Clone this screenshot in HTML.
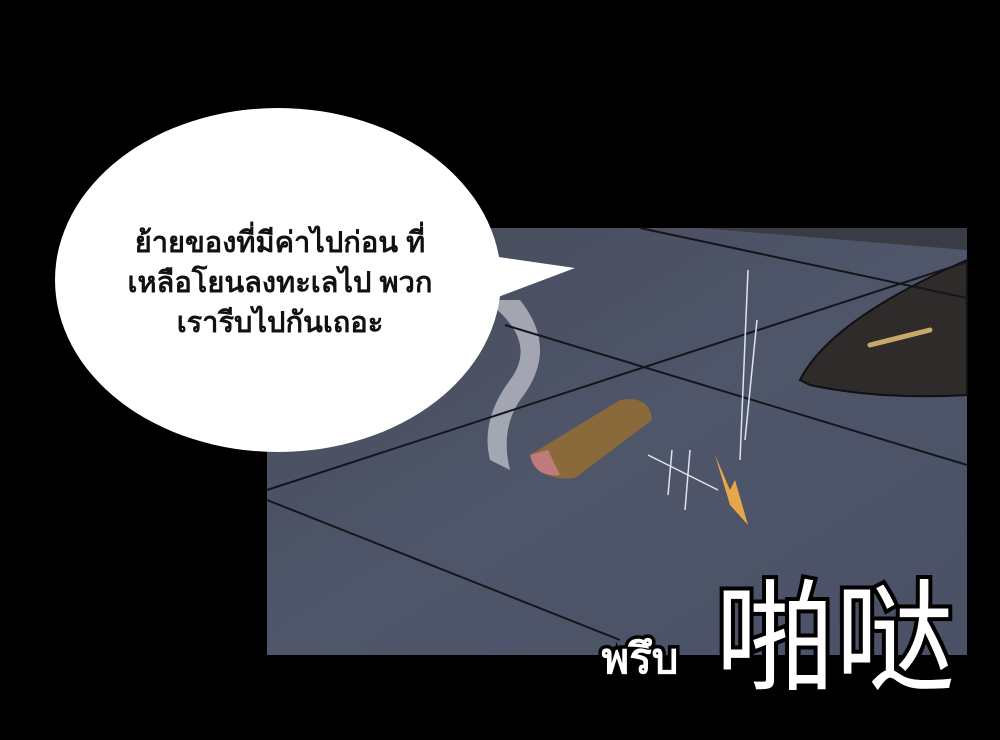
<!DOCTYPE html>
<html><head><meta charset="utf-8"><style>
html,body{margin:0;padding:0;background:#000;width:1000px;height:740px;overflow:hidden}
svg{display:block}
</style></head><body>
<svg width="1000" height="740" viewBox="0 0 1000 740" xmlns="http://www.w3.org/2000/svg">
<rect width="1000" height="740" fill="#000"/>
<defs>
<linearGradient id="g" x1="0" y1="0" x2="1" y2="1">
<stop offset="0" stop-color="#464b59"/><stop offset="0.5" stop-color="#4f566a"/><stop offset="1" stop-color="#4a5166"/>
</linearGradient>
</defs>
<rect x="267" y="228" width="700" height="427" fill="url(#g)"/>
<path d="M500 228 L967 228 L967 250 L700 228 Z" fill="#3a3c44"/>
<path d="M800 380 Q830 320 967 260 L967 395 Q880 400 810 385 Z" fill="#2e2b2a" stroke="#111" stroke-width="2"/>
<path d="M870 345 L930 330" stroke="#c9a96a" stroke-width="5" stroke-linecap="round"/>
<path d="M485 300 Q540 340 510 380 Q480 420 490 460 L510 470 Q500 430 520 400 Q560 350 520 300 Z" fill="#b9bcc6" opacity="0.8"/>
<g stroke="#15161c" stroke-width="2" fill="none">
<path d="M267 490 L967 262"/>
<path d="M505 325 L967 465"/>
<path d="M267 500 L620 640"/>
<path d="M640 228 L967 298"/>
</g>
<path d="M530 455 L620 400 Q650 395 652 420 L575 478 Q540 482 530 455 Z" fill="#8a6a3a"/>
<path d="M530 455 Q535 478 560 475 L548 450 Z" fill="#c07a78"/>
<g stroke="#dfe3ee" stroke-width="1.5" fill="none">
<path d="M748 270 L740 460"/><path d="M757 320 L745 440"/>
<path d="M672 450 L668 495"/><path d="M690 450 L685 510"/><path d="M648 455 L718 490"/>
</g>
<path d="M715 455 L730 490 L735 480 L748 525 L730 505 Z" fill="#e8a64a"/>
<ellipse cx="278" cy="280" rx="223" ry="172" fill="#fff"/>
<path d="M485 255 L575 268 L490 300 Z" fill="#fff"/>
<g font-family="'Liberation Sans','Noto Sans CJK SC',sans-serif" font-size="29" font-weight="bold" fill="#111" text-anchor="middle">
<text x="280" y="252">ย้ายของที่มีค่าไปก่อน ที่</text>
<text x="280" y="292">เหลือโยนลงทะเลไป พวก</text>
<text x="280" y="332">เรารีบไปกันเถอะ</text>
</g>
<text x="640" y="673" font-family="'Liberation Sans',sans-serif" font-size="42" font-weight="bold" fill="#fff" stroke="#000" stroke-width="7" paint-order="stroke" text-anchor="middle">พรึบ</text>
<text x="835" y="680" font-family="'WenQuanYi Zen Hei','Noto Sans CJK SC',sans-serif" font-size="120" fill="#fff" stroke="#000" stroke-width="8" paint-order="stroke" text-anchor="middle">啪哒</text>
</svg>
</body></html>
